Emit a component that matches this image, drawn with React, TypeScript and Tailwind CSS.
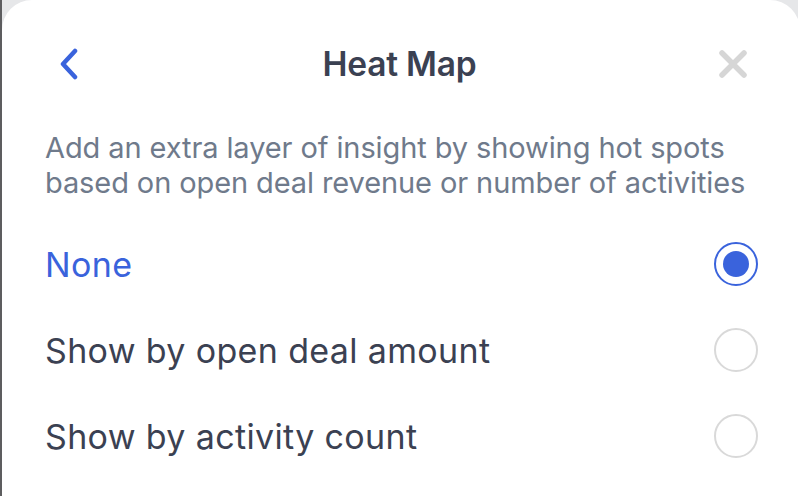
import { useState } from 'react';

const options = [
  { id: 'none', label: 'None' },
  { id: 'deal', label: 'Show by open deal amount' },
  { id: 'activity', label: 'Show by activity count' },
];

export default function App() {
  const [selected, setSelected] = useState('none');

  return (
    <div
      className="flex h-[496px] w-[798px] overflow-hidden border-l-2 border-[#5d5d5f] bg-[#e6e7e9]"
      style={{ fontFamily: 'Inter, "Noto Sans", sans-serif' }}
    >
      <div className="mr-[-2px] flex-1 rounded-tl-[30px] rounded-tr-[30px] bg-white">
        <div className="mt-[36px] flex h-[56px] items-center justify-between pl-[56px] pr-[51px]">
          <button className="flex h-[32px] w-[24px] items-center">
            <svg width="22" height="32" viewBox="0 0 22 32" fill="none">
              <path
                d="M17 3 L5 16 L17 29"
                stroke="#3a63dc"
                strokeWidth="4.5"
                strokeLinecap="round"
                strokeLinejoin="round"
              />
            </svg>
          </button>
          <h1 className="text-[33.5px] font-semibold tracking-[-0.2px] text-[#3b4152]">Heat Map</h1>
          <button className="flex h-[32px] w-[32px] items-center justify-center">
            <svg width="30" height="30" viewBox="0 0 30 30" fill="none">
              <path
                d="M4 4 L26 26 M26 4 L4 26"
                stroke="#d6d6d6"
                strokeWidth="5.5"
                strokeLinecap="round"
              />
            </svg>
          </button>
        </div>

        <p className="mt-[38px] pl-[43px] pr-[40px] text-[29px] leading-[35px] tracking-[-0.1px] text-[#6f7a8b]">
          Add an extra layer of insight by showing hot spots based on open deal revenue or number of
          activities
        </p>

        <div className="mt-[21px] pl-[43px] pr-[42px]">
          {options.map((o) => {
            const active = selected === o.id;
            return (
              <button
                key={o.id}
                onClick={() => setSelected(o.id)}
                className="flex h-[86px] w-full items-center justify-between text-left"
              >
                <span
                  className={
                    active
                      ? 'text-[34px] tracking-[0.35px] text-[#3a63dc]'
                      : 'text-[34px] tracking-[0.35px] text-[#3b4152]'
                  }
                >
                  {o.label}
                </span>
                {active ? (
                  <span className="flex h-[44px] w-[44px] items-center justify-center rounded-full border-2 border-[#3a63dc]">
                    <span className="h-[26px] w-[26px] rounded-full bg-[#3a63dc]" />
                  </span>
                ) : (
                  <span className="h-[44px] w-[44px] rounded-full border-2 border-[#d9d9d9]" />
                )}
              </button>
            );
          })}
        </div>
      </div>
    </div>
  );
}
